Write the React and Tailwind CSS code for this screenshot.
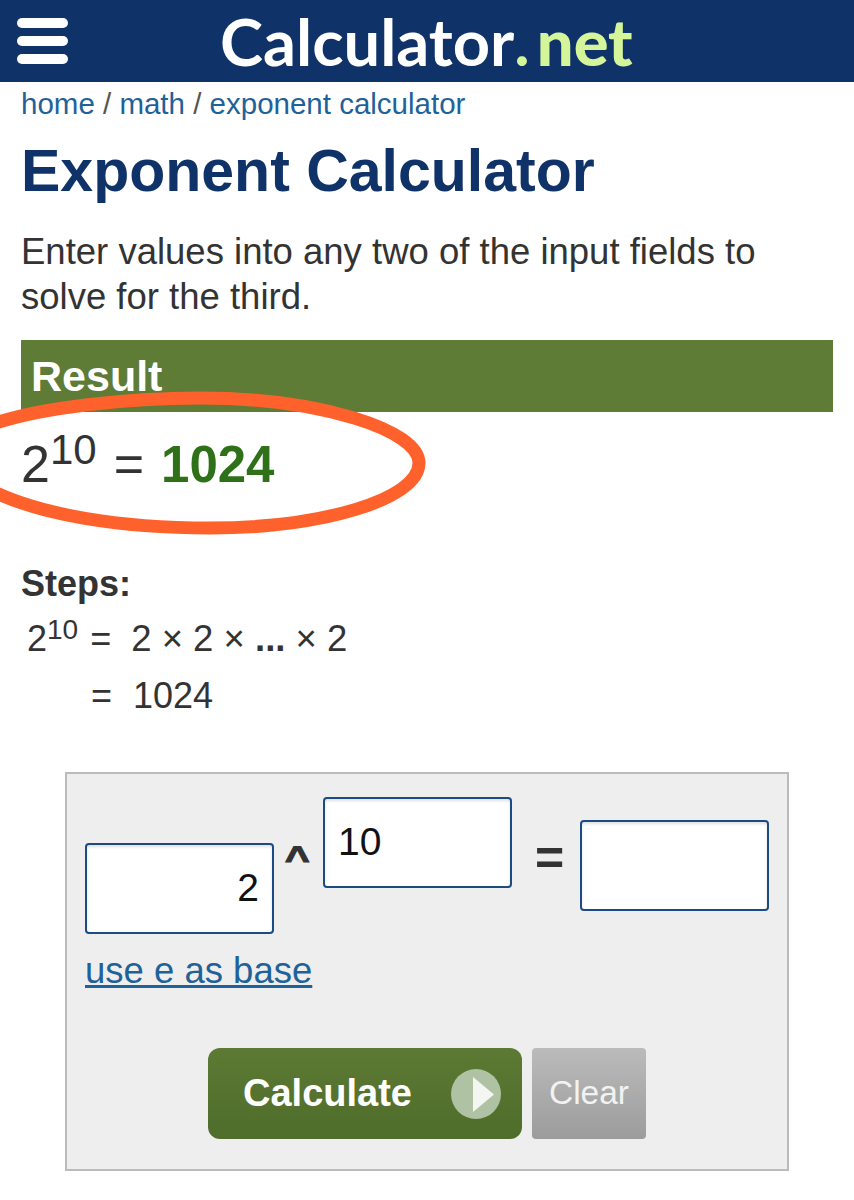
import React from 'react';

const arial = { fontFamily: '"Liberation Sans", Arial, sans-serif' };

const Field = ({ value, align = 'text-left', className = '' }) => (
  <div className={`w-[189px] h-[91px] shrink-0 bg-white border-2 border-[#1c4a82] rounded-[4px] shadow-[inset_0_2px_3px_rgba(0,0,0,0.12)] px-[13px] flex items-center text-[39px] text-[#111] ${align} ${className}`}>
    <span className="w-full">{value}</span>
  </div>
);

const App = () => (
  <div className="relative w-[854px] h-[1200px] bg-white overflow-hidden text-[#333]" style={arial}>
    <header className="h-[82px] bg-[#0f3368] flex items-center pl-[17px]">
      <div className="w-[51px] flex flex-col gap-[8px]">
        <div className="h-[10px] bg-white rounded-full" />
        <div className="h-[10px] bg-white rounded-full" />
        <div className="h-[10px] bg-white rounded-full" />
      </div>
      <div className="ml-[152px] flex items-baseline text-[65px] leading-[78px] font-bold text-white" style={{ fontFamily: 'Lato, sans-serif' }}>
        Calculator<span className="text-[#d5f59b]">.</span>
        <span className="ml-[7px] font-black text-[#d5f59b]">net</span>
      </div>
    </header>

    <main className="px-[21px]">
      <div className="mt-[6px] text-[29.5px] leading-[32px] text-[#555]">
        <span className="text-[#1f6299]">home</span> / <span className="text-[#1f6299]">math</span> / <span className="text-[#1f6299]">exponent calculator</span>
      </div>
      <h1 className="mt-[19px] text-[59px] leading-[64px] font-bold text-[#0f3368]">Exponent Calculator</h1>
      <p className="mt-[26px] text-[36.5px] leading-[45px] text-[#333]">
        Enter values into any two of the input fields to solve for the third.
      </p>

      <div className="mt-[21px] w-[812px] h-[72px] bg-[#5e7c35] pl-[10px] pt-[12px] text-[43px] leading-[48px] font-bold text-white">Result</div>

      <div className="mt-[22px] flex items-baseline text-[52px] leading-[60px] text-[#333]">
        <span>2</span>
        <sup className="text-[42px] leading-none top-[-18px]">10</sup>
        <span className="ml-[17px]">=</span>
        <span className="ml-[17px] text-[51px] font-bold text-[#2f7118]">1024</span>
      </div>

      <div className="mt-[69px] text-[36px] leading-[40px] font-bold">Steps:</div>
      <div className="mt-[15px] ml-[6px] flex items-baseline text-[36px] leading-[40px]">
        <span>2</span><sup className="text-[28px] leading-none top-[-12px]">10</sup>
        <span className="ml-[12px]">=</span>
        <span className="ml-[20px] text-[36.5px]">2 × 2 × <b>...</b> × 2</span>
      </div>
      <div className="mt-[17px] ml-[70px] text-[36px] leading-[40px]">
        =<span className="ml-[21px]">1024</span>
      </div>

      <section className="mt-[56px] ml-[44px] w-[724px] h-[399px] bg-[#eeeeee] border-2 border-[#bbbbbb] pl-[18px] pt-[23px]">
        <div className="flex items-start">
          <Field value="2" align="text-right" className="mt-[46px]" />
          <span className="inline-block origin-top scale-y-[0.82] mt-[45px] ml-[11px] w-[38px] text-[42px] leading-[42px] font-bold text-[#333] [-webkit-text-stroke:1.5px_#333]">^</span>
          <Field value="10" />
          <span className="mt-[36px] ml-[23px] w-[45px] text-[50px] leading-[50px] font-bold text-[#333]">=</span>
          <Field value="" className="mt-[23px]" />
        </div>
        <a className="block mt-[16px] text-[36.5px] leading-[42px] text-[#1f6299] underline">use e as base</a>
        <div className="mt-[56px] ml-[123px] flex gap-[10px]">
          <button className="w-[314px] h-[91px] rounded-[12px] bg-gradient-to-b from-[#5c7a33] to-[#4f6d2b] flex items-center pl-[35px] text-[38px] font-bold text-white">
            Calculate
            <span className="ml-[39px] w-[50px] h-[50px] rounded-full bg-[#b0c2a4] flex items-center justify-center">
              <svg width="50" height="50" viewBox="0 0 50 50"><polygon points="22,8 22,43 43,25.5" fill="#f4f6f2" /></svg>
            </span>
          </button>
          <button className="w-[114px] h-[91px] rounded-[4px] bg-gradient-to-b from-[#bbbbbb] to-[#9c9c9c] text-[33.5px] text-[#f2f2f2]">Clear</button>
        </div>
      </section>
    </main>

    {/* hand drawn circle over the result */}
    <svg className="absolute left-0 top-[385px] pointer-events-none" width="440" height="160" viewBox="0 385 440 160" fill="none">
      <path d="M-10 425 C40 407 130 398 200 398 C320 398 419 430 419 463 C419 500 320 528 210 528 C120 528 40 515 -10 490" stroke="#ff612c" strokeWidth="13" />
    </svg>
  </div>
);

export default App;
